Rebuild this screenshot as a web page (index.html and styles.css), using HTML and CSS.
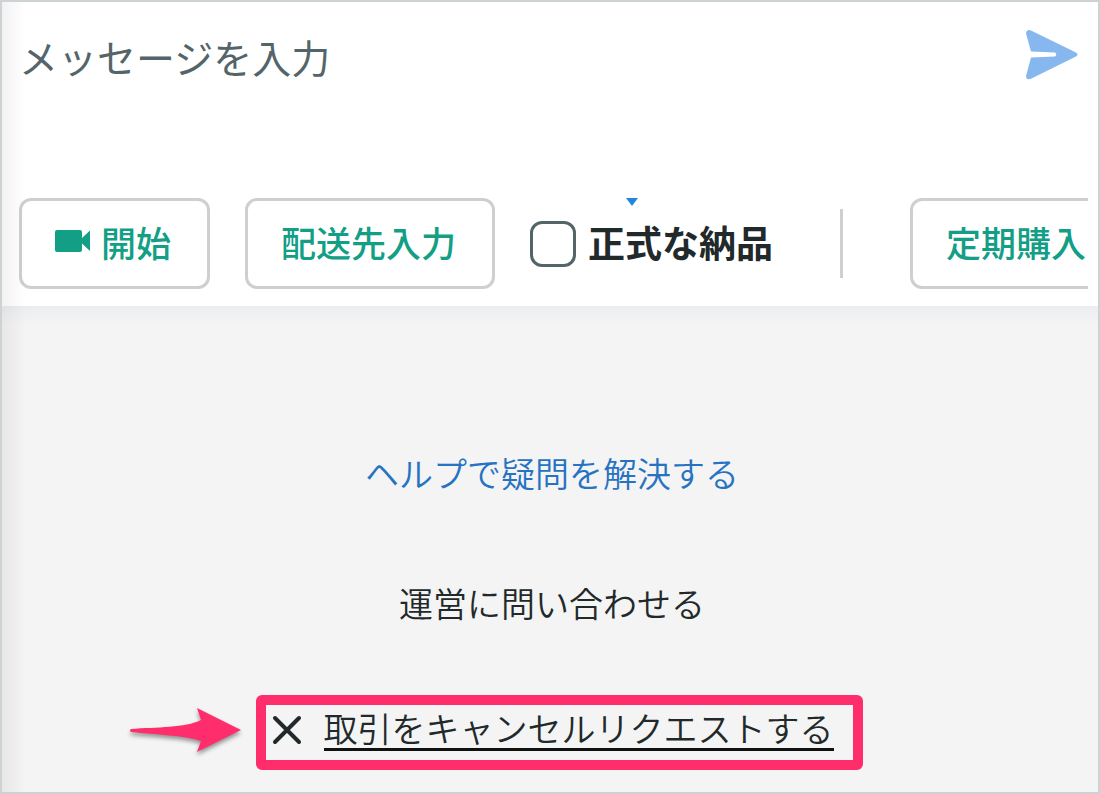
FILE: index.html
```
<!DOCTYPE html>
<html lang="ja">
<head>
    <meta charset="UTF-8">
    <meta name="viewport" content="width=device-width, initial-scale=1.0">
    <title>メッセージ</title>
    <link rel="stylesheet" href="styles.css">
</head>
<body>
    <div class="screen">
        <form class="composer">
            <div class="message-row">
                <input type="text" class="message-input" placeholder="メッセージを入力" aria-label="メッセージを入力">
                <button type="button" class="send-button" aria-label="送信">
                    <svg width="52" height="50" viewBox="0 0 52 50">
                        <path fill="#86b8ef" d="M5 .4 50 22.500Q53 24.500 50 26.500L5 48.800Q.2 50.500 0 46L5 27.500 29 26.500Q31.500 24.500 29 22.500L5 21.500 0 3.500Q.5-1 5 .4Z"/>
                    </svg>
                </button>
            </div>

            <div class="toolbar">
                <button type="button" class="tool-button">
                    <svg class="video-icon" width="36" height="24" viewBox="0 0 36 24">
                        <path fill="#139e86" d="M2 1H25Q27 1 27 3V9L35 1.500V22L27 14.500V21Q27 23 25 23H2Q0 23 0 21V3Q0 1 2 1Z"/>
                    </svg>
                    開始
                </button>
                <button type="button" class="tool-button">配送先入力</button>
                <div class="delivery">
                    <span class="caret"></span>
                    <input type="checkbox" id="delivery" class="delivery-check">
                    <label for="delivery">正式な納品</label>
                </div>
                <span class="divider"></span>
                <button type="button" class="tool-button">定期購入</button>
            </div>
        </form>

        <div class="links">
            <a href="#" class="help-link">ヘルプで疑問を解決する</a>
            <a href="#" class="contact-link">運営に問い合わせる</a>
            <div class="cancel">
                <svg class="arrow" width="120" height="56" viewBox="0 0 120 56">
                    <path fill="#ff2d6b" d="M4 26C30 24 58 25 74 17L70 5 114 27 70 49 74 38C56 32 30 32 4 29Q2 27.500 4 26Z"/>
                </svg>
                <a href="#" class="cancel-link">
                    <svg width="30" height="30" viewBox="0 0 30 30">
                        <path d="M3 3 27 27M27 3 3 27" stroke="#22292b" stroke-width="4" stroke-linecap="round"/>
                    </svg>
                    <span class="cancel-text">取引をキャンセルリクエストする</span>
                </a>
            </div>
        </div>
    </div>
</body>
</html>
```

FILE: styles.css
```
* {
    box-sizing: border-box;
}
body {
    margin: 0;
    font-family: "Noto Sans CJK JP", sans-serif;
    color: #22292b;
}
button, input {
    font-family: inherit;
}
a {
    color: inherit;
    text-decoration: none;
}
.screen {
    position: relative;
    display: flex;
    flex-direction: column;
    min-height: 100vh;
    border: 2px solid #cdd2d5;
    background-color: #f4f4f4;
    overflow: hidden;
}
/* soft shade along the left edge */
.screen::before {
    content: "";
    position: absolute;
    top: 0;
    bottom: 0;
    left: 0;
    width: 24px;
    background: linear-gradient(to right, rgba(0, 0, 0, 0.05), rgba(0, 0, 0, 0));
    pointer-events: none;
}
.composer {
    padding: 24px 10px 17px 17px;
    background-color: #fff;
}
.message-row {
    display: flex;
    align-items: flex-start;
    justify-content: space-between;
    padding-right: 10px;
    height: 172px;
}
.message-input {
    flex: 1;
    min-width: 0;
    height: 60px;
    padding: 0;
    border: none;
    outline: none;
    background: none;
    font-size: 39px;
    color: #22292b;
}
.message-input::placeholder {
    color: #536569;
    opacity: 1;
}
.send-button {
    display: flex;
    padding: 4px 0;
    border: none;
    background: none;
    cursor: pointer;
}
.toolbar {
    display: flex;
    align-items: center;
    gap: 35px;
    overflow: hidden;
    white-space: nowrap;
}
.tool-button {
    display: flex;
    flex-shrink: 0;
    align-items: center;
    gap: 10px;
    height: 91px;
    padding: 0 36px 5px 33px;
    border: 3px solid #cfcfcf;
    border-radius: 12px;
    background: none;
    color: #139e86;
    font-size: 35px;
    font-weight: 500;
    cursor: pointer;
}
.delivery {
    position: relative;
    display: flex;
    flex-shrink: 0;
    align-items: center;
    gap: 12px;
    height: 91px;
    font-size: 37px;
    font-weight: 700;
}
.delivery label {
    padding-bottom: 4px;
}
.delivery-check {
    appearance: none;
    width: 46px;
    height: 46px;
    margin: 0;
    border: 3px solid #536569;
    border-radius: 12px;
    background-color: #fff;
}
.delivery-check:checked {
    background-color: #139e86;
}
.caret {
    position: absolute;
    top: 0;
    left: 96px;
    border: 6px solid transparent;
    border-top: 8px solid #2386dd;
    border-bottom: none;
}
.divider {
    flex-shrink: 0;
    width: 3px;
    height: 69px;
    margin: 0 32px;
    background-color: #cfcfcf;
}
.links {
    flex: 1;
    display: flex;
    flex-direction: column;
    align-items: center;
    padding: 142px 0 20px 4px;
    background: linear-gradient(#ebedf0, #f4f4f4 20px);
    font-size: 34px;
    font-weight: 350;
    line-height: 50px;
}
.help-link {
    color: #2673c2;
}
.contact-link {
    margin-top: 80px;
}
.cancel {
    position: relative;
    margin: 67px 0 0 14px;
}
.arrow {
    position: absolute;
    top: 8px;
    right: 100%;
    margin-right: 9px;
    filter: drop-shadow(0 3px 2px rgba(0, 0, 0, 0.4));
}
.cancel-link {
    display: flex;
    align-items: center;
    gap: 22px;
    padding: 3px 19px 9px 6px;
    border: 10px solid #ff2d6b;
    border-radius: 6px;
}
.cancel-text {
    line-height: 40px;
    border-bottom: 3px solid #111;
}
```
